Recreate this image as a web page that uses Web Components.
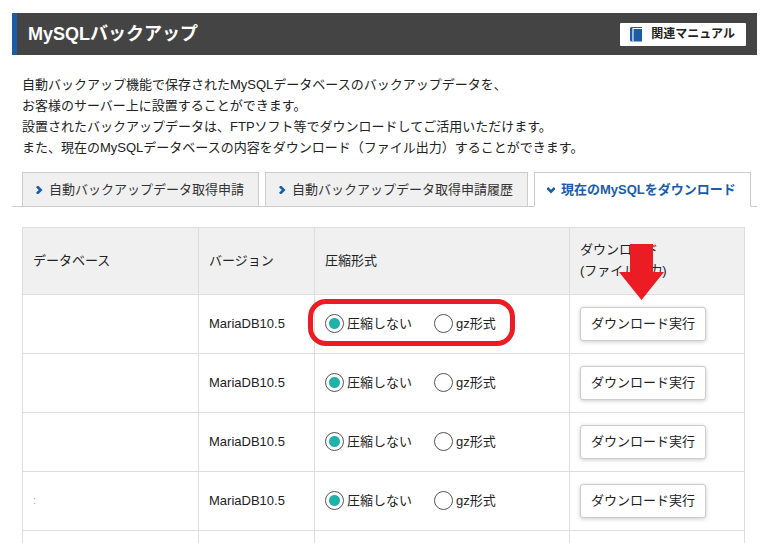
<!DOCTYPE html>
<html lang="ja">
<head>
<meta charset="utf-8">
<title>MySQLバックアップ</title>
<style>
  body {
    margin: 0;
    height: 100vh;
    overflow: hidden;
    background: #fff;
    color: #222;
    font: 13px/21px "Liberation Sans", "Noto Sans CJK JP", sans-serif;
  }
</style>
</head>
<body>
<backup-page></backup-page>

<template id="page-template">
  <style>
    :host { display: block; padding: 13px 19px 0 12px; }
    .intro { margin: 19px 10px 14px; }
    .panel { display: block; padding: 20px 12px 0 10px; }
  </style>
  <page-heading>
    MySQLバックアップ
    <manual-link slot="action">関連マニュアル</manual-link>
  </page-heading>
  <p class="intro">
    自動バックアップ機能で保存されたMySQLデータベースのバックアップデータを、<br>
    お客様のサーバー上に設置することができます。<br>
    設置されたバックアップデータは、FTPソフト等でダウンロードしてご活用いただけます。<br>
    また、現在のMySQLデータベースの内容をダウンロード（ファイル出力）することができます。
  </p>
  <tab-bar>
    <tab-item>自動バックアップデータ取得申請</tab-item>
    <tab-item>自動バックアップデータ取得申請履歴</tab-item>
    <tab-item active>現在のMySQLをダウンロード</tab-item>
  </tab-bar>
  <database-table class="panel"></database-table>
</template>

<template id="heading-template">
  <style>
    :host {
      display: flex;
      align-items: center;
      justify-content: space-between;
      height: 42px;
      padding: 0 11px;
      border-left: 5px solid #1a5ca8;
      background: #444;
      box-sizing: border-box;
    }
    h1 { margin: 0; font-size: 18px; line-height: 24px; color: #fff; }
  </style>
  <h1><slot></slot></h1>
  <slot name="action"></slot>
</template>

<template id="manual-template">
  <style>
    :host { display: block; }
    a {
      display: flex;
      align-items: center;
      gap: 8px;
      height: 23px;
      padding: 0 11px 0 10px;
      border-radius: 1px;
      background: #fff;
      color: #222;
      font-size: 12px;
      font-weight: bold;
      text-decoration: none;
    }
  </style>
  <a href="#manual">
    <svg width="13" height="15" viewBox="0 0 13 15" aria-hidden="true">
      <path fill="#1a5ca8" d="M1.500 0H12v1H3v13.500H1.500Q0 14.500 0 13V1.500Q0 0 1.500 0z"/>
      <path fill="#1a5ca8" d="M3.500 2H12v12.500H3.500z"/>
      <path fill="#9dbbe0" d="M2 1h1v13.500H2z"/>
    </svg>
    <span><slot></slot></span>
  </a>
</template>

<template id="tabs-template">
  <style>
    :host {
      display: flex;
      gap: 6px;
      padding: 0 5px 0 10px;
      border-bottom: 1px solid #ccc;
    }
  </style>
  <slot></slot>
</template>

<template id="tab-template">
  <style>
    :host { display: block; margin-bottom: -1px; white-space: nowrap; }
    a {
      display: flex;
      align-items: center;
      gap: 6px;
      height: 33px;
      padding: 0 14px 0 12px;
      border: 1px solid #ccc;
      background: #f0f0f0;
      color: #333;
      text-decoration: none;
    }
    :host([active]) a {
      border-bottom-color: #fff;
      background: #fff;
      color: #1a5ca8;
      font-weight: bold;
    }
    :host([active]) svg { transform: rotate(90deg); }
  </style>
  <a href="#tab">
    <svg width="8" height="8" viewBox="0 0 8 8" aria-hidden="true">
      <path d="M1 1.200L2.200 0H3.500L7.500 4L3.500 8H2.200L1 6.800L3.800 4z" fill="#1a5ca8"/>
    </svg>
    <span><slot></slot></span>
  </a>
</template>

<template id="table-template">
  <style>
    :host { display: block; }
    table { width: 100%; border-collapse: collapse; table-layout: fixed; }
    th, td {
      height: 34px;
      padding: 11px 10px 13px;
      border: 1px solid #ddd;
      text-align: left;
      font-weight: normal;
    }
    th { background: #f0f0f0; }
    td:last-child { padding: 12px 10px; }
    td:first-child { color: #b98; font-size: 11px; }
    .name { width: 155px; }
    .version { width: 95px; }
    .download { width: 154px; }
  </style>
  <table>
    <thead>
      <tr>
        <th class="name">データベース</th>
        <th class="version">バージョン</th>
        <th>圧縮形式</th>
        <th class="download">ダウンロード<br>(ファイル出力)</th>
      </tr>
    </thead>
    <tbody></tbody>
    <tfoot>
      <tr><td></td><td></td><td></td><td></td></tr>
    </tfoot>
  </table>
</template>

<template id="format-template">
  <style>
    :host {
      display: inline-flex;
      gap: 22px;
      position: relative;
      vertical-align: middle;
    }
    label { display: flex; align-items: center; gap: 3px; }
    input {
      appearance: none;
      width: 19px;
      height: 19px;
      margin: 0;
      border: 1px solid #555;
      border-radius: 50%;
      background: #fff;
    }
    input:checked { background: radial-gradient(circle, #20b2aa 5px, #fff 6px); }
    .ring { display: none; }
    :host([marked]) .ring {
      display: block;
      position: absolute;
      inset: -14px -19px -12px -17px;
      border: 5px solid #ec1c24;
      border-radius: 18px;
      pointer-events: none;
    }
  </style>
  <label><input type="radio" name="format" value="none" checked>圧縮しない</label>
  <label><input type="radio" name="format" value="gz">gz形式</label>
  <div class="ring"></div>
</template>

<template id="download-template">
  <style>
    :host { display: block; position: relative; }
    button {
      display: block;
      height: 34px;
      padding: 0 10px 2px;
      border: 1px solid #ccc;
      border-radius: 3px;
      background: #fff;
      box-shadow: 0 1px 4px rgba(0, 0, 0, 0.2);
      color: #222;
      font: inherit;
    }
    svg { display: none; }
    :host([marked]) svg {
      display: block;
      position: absolute;
      left: 39px;
      bottom: calc(100% + 7px);
    }
  </style>
  <button type="button"><slot></slot></button>
  <svg width="45" height="56" viewBox="0 0 45 56" aria-hidden="true">
    <path fill="#ec1c24" d="M11 0h23v28h11L22.500 56 0 28h11z"/>
  </svg>
</template>

<script>
const databases = [
  { name: '', version: 'MariaDB10.5', marked: true },
  { name: '', version: 'MariaDB10.5' },
  { name: '', version: 'MariaDB10.5' },
  { name: ':', version: 'MariaDB10.5' },
];

class BaseElement extends HTMLElement {
  constructor() {
    super();
    this.attachShadow({ mode: 'open' });
    const template = document.getElementById(this.constructor.template);
    this.shadowRoot.appendChild(template.content.cloneNode(true));
  }
}

class PageHeading extends BaseElement { static template = 'heading-template'; }
class ManualLink extends BaseElement { static template = 'manual-template'; }
class TabBar extends BaseElement { static template = 'tabs-template'; }
class FormatPicker extends BaseElement { static template = 'format-template'; }
class DownloadButton extends BaseElement { static template = 'download-template'; }
class BackupPage extends BaseElement { static template = 'page-template'; }

class TabItem extends BaseElement {
  static template = 'tab-template';

  connectedCallback() {
    if (this.hasAttribute('active')) {
      this.shadowRoot.querySelector('a').setAttribute('aria-current', 'page');
    }
  }
}

class DatabaseTable extends BaseElement {
  static template = 'table-template';

  connectedCallback() {
    this._render();
  }

  _render() {
    const body = this.shadowRoot.querySelector('tbody');
    body.innerHTML = databases.map((db) => {
      const marked = db.marked ? ' marked' : '';
      return '<tr>'
        + '<td>' + db.name + '</td>'
        + '<td>' + db.version + '</td>'
        + '<td><format-picker' + marked + '></format-picker></td>'
        + '<td><download-button' + marked + '>ダウンロード実行</download-button></td>'
        + '</tr>';
    }).join('');
  }
}

customElements.define('page-heading', PageHeading);
customElements.define('manual-link', ManualLink);
customElements.define('tab-bar', TabBar);
customElements.define('tab-item', TabItem);
customElements.define('format-picker', FormatPicker);
customElements.define('download-button', DownloadButton);
customElements.define('database-table', DatabaseTable);
customElements.define('backup-page', BackupPage);
</script>
</body>
</html>
